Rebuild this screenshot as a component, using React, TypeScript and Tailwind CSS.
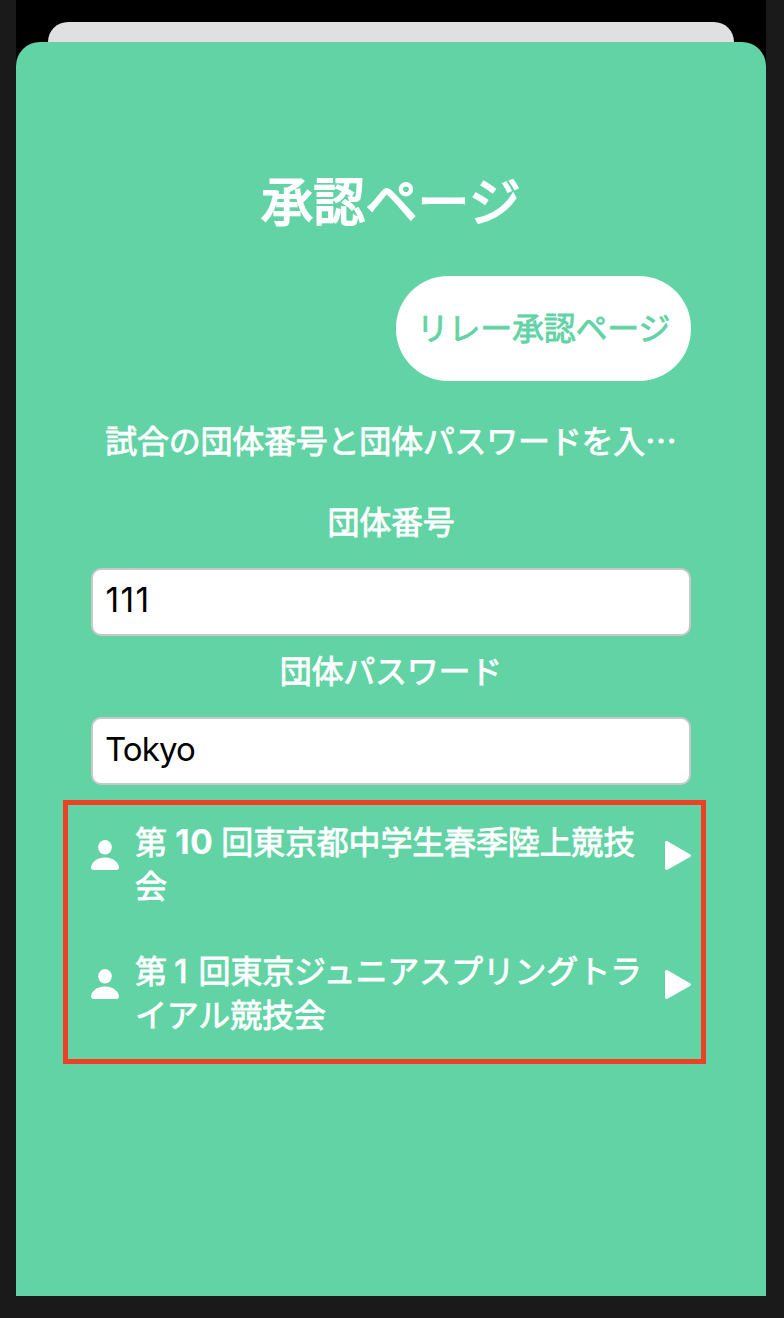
import React from "react";

function PersonIcon() {
  return (
    <svg className="mt-[20px] h-[30px] w-[28px] shrink-0" viewBox="0 0 28 30" fill="#fff">
      <ellipse cx="14" cy="7.3" rx="6.8" ry="7.3" />
      <path d="M2.6 30C0.9 30 0 29.2 0 27.6C0 23.6 5.2 17.6 14 17.6S28 23.6 28 27.6C28 29.2 27.1 30 25.4 30Z" />
    </svg>
  );
}

function PlayIcon() {
  return (
    <svg className="mt-[21px] ml-2 h-[29px] w-[26px] shrink-0" viewBox="0 0 26 29" fill="#fff">
      <path d="M0 1.8C0 .3 1.4-.4 2.9 .5L25 13.2C26.3 14 26.3 15.2 25 16L2.9 28.6C1.4 29.4 0 28.7 0 27.2Z" />
    </svg>
  );
}

function Field({ label, value, inputClass }: { label: string; value: string; inputClass: string }) {
  return (
    <label className="flex flex-col">
      <span className="-mt-[2px] h-[46px] text-center leading-[46px]">{label}</span>
      <input
        className={`mt-[25px] h-[68px] w-full rounded-[10px] border-2 border-[#c8c8c8] bg-white pr-3 pb-1 font-['Inter',sans-serif] font-normal text-black outline-none [-webkit-text-stroke:0px] ${inputClass}`}
        defaultValue={value}
      />
    </label>
  );
}

function Meet({ first, second }: { first: React.ReactNode; second: string }) {
  return (
    <li className="flex h-[88px] items-start">
      <PersonIcon />
      <div className="-mt-[2px] ml-4 w-[522px] shrink-0 tracking-[-0.18px] whitespace-nowrap">
        <p className="h-[44px] leading-[44px]">{first}</p>
        <p className="h-[44px] leading-[44px]">{second}</p>
      </div>
      <PlayIcon />
    </li>
  );
}

export default function App() {
  return (
    <div className="flex h-[1318px] w-[784px] bg-[#1a1a1a] pl-4 font-['Noto_Sans_CJK_JP',sans-serif]" lang="ja">
      <div className="flex h-[1296px] w-[750px] flex-col bg-black pt-[22px]">
        <div className="mr-8 ml-8 h-5 rounded-t-[20px] bg-[#e0e0e0]" />
        <main className="flex flex-1 flex-col rounded-t-[24px] bg-[#62d3a5] px-[75px] pt-[117px] text-[32px] font-normal tracking-[-0.25px] text-white [-webkit-text-stroke:0.8px]">
          <h1 className="h-20 text-center text-[52px] leading-[80px] tracking-[0.2px] [-webkit-text-stroke:1.8px]">承認ページ</h1>
          <button className="mt-[37px] h-[105px] w-[295px] self-end rounded-[52px] bg-white pb-[5px] text-[#62d3a5]">
            リレー承認ページ
          </button>
          <p className="mt-[35px] h-[46px] text-center leading-[46px] whitespace-nowrap">
            試合の団体番号と団体パスワードを入…
          </p>
          <div className="mt-[37px] flex flex-col gap-[12px]">
            <Field label="団体番号" value="111" inputClass="pl-[12.5px] text-[33.5px] tracking-[1.4px]" />
            <Field label="団体パスワード" value="Tokyo" inputClass="pl-[12px] text-[33px] tracking-[-0.9px]" />
          </div>
          <ul className="mt-[15px] -mr-[15px] -ml-[28px] flex h-[264px] flex-col gap-[41px] border-[5px] border-[#ee4027] pt-[15px] pl-[23px]">
            <Meet
              first={
                <>
                  第
                  <span className="inline-block w-[54.5px] text-center font-['Inter',sans-serif] text-[34px] leading-none font-bold tracking-[0.3px] [-webkit-text-stroke:0px]">
                    10
                  </span>
                  回東京都中学生春季陸上競技
                </>
              }
              second="会"
            />
            <Meet
              first={
                <>
                  第
                  <span className="inline-block w-[31.75px] pr-1 text-center font-['Inter',sans-serif] leading-none font-medium [-webkit-text-stroke:0.5px]">
                    1
                  </span>
                  回東京ジュニアスプリングトラ
                </>
              }
              second="イアル競技会"
            />
          </ul>
        </main>
      </div>
    </div>
  );
}
